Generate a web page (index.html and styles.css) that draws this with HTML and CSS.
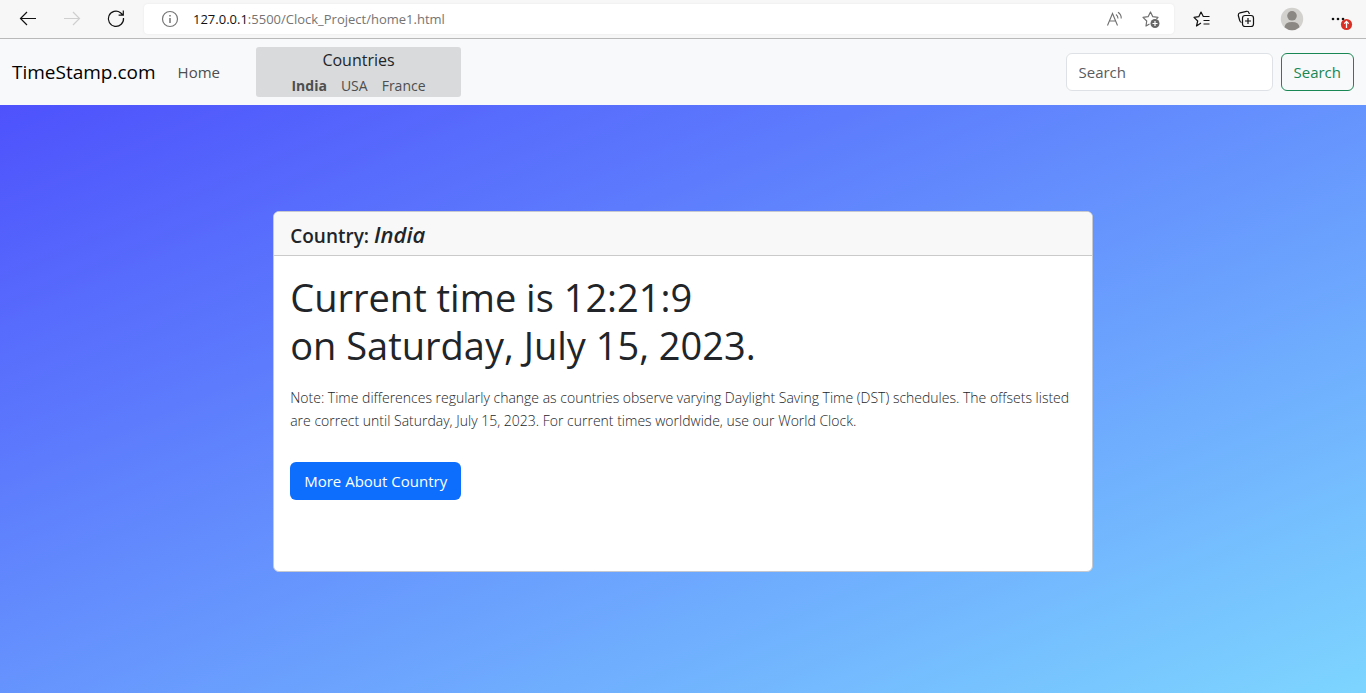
FILE: index.html
```html
<!DOCTYPE html>
<html lang="en">
<head>
<meta charset="utf-8">
<meta name="viewport" content="width=device-width, initial-scale=1">
<title>TimeStamp.com</title>
<link rel="stylesheet" href="styles.css">
</head>
<body>
<header class="toolbar">
  <button class="tool" type="button" aria-label="Back"><svg width="20" height="20" viewBox="0 0 20 20"><path d="M18 9.500H2.500M9 3L2.500 9.500L9 16" stroke="#111" stroke-width="1.200"/></svg></button>
  <button class="tool" type="button" aria-label="Forward" disabled><svg width="20" height="20" viewBox="0 0 20 20"><path d="M2 9.500H17.500M11 3L17.500 9.500L11 16" stroke="#cfcfcf" stroke-width="1.200"/></svg></button>
  <button class="tool" type="button" aria-label="Refresh"><svg width="20" height="20" viewBox="0 0 20 20"><path d="M17.500 9A7.600 7.600 0 1 1 14.500 3.700L17 6M17.300 1.500V6.200H12.600" stroke="#111" stroke-width="1.200"/></svg></button>
  <div class="address">
    <svg width="18" height="18" viewBox="0 0 18 18"><circle cx="9" cy="9" r="7.500" stroke="#767676" stroke-width="1.200"/><path d="M9 8V13M9 5V6.500" stroke="#767676" stroke-width="1.500"/></svg>
    <span class="url"><span class="host">127.0.0.1</span>:5500/Clock_Project/home1.html</span>
    <button class="tool small" type="button" aria-label="Read aloud"><svg width="18" height="18" viewBox="0 0 18 18"><path d="M1.500 15.500L6.500 3.500L11.500 15.500M3.500 11H9.700M10 4.500Q12 6 12 8.500M12 2.200Q15.500 4.500 15.200 8.500" stroke="#707070" stroke-width="1.100"/></svg></button>
    <button class="tool small" type="button" aria-label="Add to favorites"><svg width="18" height="18" viewBox="0 0 18 18"><path d="M7.500 14L4 16L4.700 11L1 7.400L6.100 6.700L8.500 2L10.800 6.700L16 7.400L14.500 9" stroke="#707070" stroke-width="1.200" stroke-linejoin="round"/><circle cx="13" cy="13.500" r="4.500" fill="#666"/><path d="M13 11V16M10.500 13.500H15.500" stroke="#fff" stroke-width="1.200"/></svg></button>
  </div>
  <div class="actions">
    <button class="tool small" type="button" aria-label="Favorites"><svg width="18" height="18" viewBox="0 0 18 18"><path d="M8 13L3.500 16L4.700 11L1 7.300L5.800 6.700L8 2L10.300 6.500H16.500M10.500 10.500H16.500M10.500 14H16.500" stroke="#111" stroke-width="1.200" stroke-linejoin="round"/></svg></button>
    <button class="tool small" type="button" aria-label="Collections"><svg width="18" height="18" viewBox="0 0 18 18"><path d="M4.500 12.500Q3 12 2.700 10.500L1.300 5.500Q1 3.500 3 2.800L9.500 1.300Q11.500 1 12 3L12.500 4" stroke="#111" stroke-width="1.200"/><rect x="5.500" y="5.500" width="11" height="11" rx="2.500" stroke="#111" stroke-width="1.200"/><path d="M11 8V14M8 11H14" stroke="#111" stroke-width="1.200"/></svg></button>
    <button class="tool profile" type="button" aria-label="Profile"><svg width="24" height="24" viewBox="0 0 24 24"><circle cx="12" cy="12" r="11.200" fill="#d3d1ce"/><circle cx="12" cy="8.800" r="4.800" fill="#8b8783"/><path d="M4.500 20.200Q5 15 12 15Q19 15 19.500 20.200Q16 23.200 12 23.200Q8 23.200 4.500 20.200Z" fill="#8b8783"/></svg></button>
    <button class="tool menu" type="button" aria-label="Settings and more"><svg width="24" height="24" viewBox="0 0 24 24"><g fill="#111"><circle cx="4" cy="12" r="1.300"/><circle cx="9" cy="12" r="1.300"/><circle cx="14" cy="12" r="1.300"/></g><circle cx="17.500" cy="17.500" r="5.600" fill="#d93025"/><path d="M17.500 21V14.500M15.300 16.600L17.500 14.400L19.700 16.600" stroke="#fff" stroke-width="1.300"/></svg></button>
  </div>
</header>
<nav class="navbar">
  <a class="brand" href="#">TimeStamp.com</a>
  <a class="home" href="#">Home</a>
  <div class="countries">
    <span class="countries-title">Countries</span>
    <div class="country-list">
      <a class="country active" href="#">India</a>
      <a class="country" href="#">USA</a>
      <a class="country" href="#">France</a>
    </div>
  </div>
  <form class="search">
    <input class="search-box" type="search" placeholder="Search" aria-label="Search">
    <button class="search-button" type="submit">Search</button>
  </form>
</nav>
<main class="page">
  <section class="card">
    <h2 class="card-header">Country: <em class="country-name">India</em></h2>
    <div class="card-body">
      <h1 class="time">Current time is 12:21:9<br>on Saturday, July 15, 2023.</h1>
      <p class="note">Note: Time differences regularly change as countries observe varying Daylight Saving Time (DST) schedules. The offsets listed are correct until Saturday, July 15, 2023. For current times worldwide, use our World Clock.</p>
      <a class="more" href="#">More About Country</a>
    </div>
  </section>
</main>
</body>
</html>
```
FILE: styles.css
```css
* { box-sizing: border-box; }

body {
  margin: 0;
  min-height: 100vh;
  display: flex;
  flex-direction: column;
  font-family: "Open Sans", "Noto Sans", sans-serif;
  font-size: 15px;
  line-height: 24px;
  color: #212529;
}

a { color: inherit; text-decoration: none; }
svg { display: block; fill: none; }

.toolbar {
  display: flex;
  align-items: center;
  height: 39px;
  padding: 0 13px 0 18px;
  gap: 24px;
  background: #f7f7f7;
  border-bottom: 1px solid #b9b9b9;
}

.tool {
  display: block;
  padding: 0;
  border: 0;
  background: none;
}

.address {
  flex: 1;
  display: flex;
  align-items: center;
  height: 30px;
  margin-left: -6px;
  padding: 0 14px 0 17px;
  gap: 18px;
  border-radius: 4px;
  background: #fff;
  box-shadow: 0 0 2px #e4e4e4;
}

.url {
  flex: 1;
  margin-left: -4px;
  font-size: 13px;
  color: #747474;
}

.host { color: #111; }

.actions {
  display: flex;
  align-items: center;
  gap: 26px;
  margin-left: -5px;
}

.profile { margin: 0 -1px; }

.navbar {
  display: flex;
  align-items: center;
  height: 66px;
  padding: 0 12px;
  background: #f8f9fa;
}

.brand {
  margin-right: 22px;
  font-size: 19px;
  color: #000;
}

.home { color: #4d4e4f; }

.countries {
  min-width: 205px;
  height: 50px;
  margin-left: 36px;
  border-radius: 3px;
  background: #d8dadb;
  text-align: center;
}

.countries-title { display: block; font-size: 16px; line-height: 27px; }

.country-list {
  display: flex;
  justify-content: center;
  gap: 14px;
  font-size: 14px;
  color: #4d4e4f;
}

.active { font-weight: 700; }

.search {
  display: flex;
  gap: 8px;
  margin-left: auto;
}

.search-box,
.search-button {
  height: 38px;
  padding: 0 12px;
  border-radius: 6px;
  font: inherit;
}

.search-box {
  width: 207px;
  border: 1px solid #dee2e6;
  background: #fff;
}

.search-box::placeholder { color: #595c5f; opacity: 1; }

.search-button {
  border: 1px solid #198754;
  background: transparent;
  color: #198754;
}

.page {
  flex: 1;
  padding-top: 106px;
  background: linear-gradient(to bottom right, #4e52fc, #7dd5ff);
}

.card {
  width: 60%;
  min-height: 361px;
  margin: 0 auto;
  border: 1px solid #c6c9cf;
  border-radius: 6px;
  background: #fff;
  overflow: hidden;
}

.card-header {
  margin: 0;
  padding: 11px 16px 5px;
  border-bottom: 1px solid #cacaca;
  background: #f8f8f8;
  font-size: 19px;
  font-weight: 600;
  line-height: 27px;
}

.country-name { font-size: 22px; line-height: 20px; }

.card-body { padding: 17px 16px; }

.time {
  margin: 0 0 17px;
  font-size: 38px;
  font-weight: 400;
  line-height: 48px;
}

.note {
  margin: 0 0 30px;
  font-size: 14px;
  font-weight: 300;
  line-height: 23px;
}

.more {
  display: inline-block;
  padding: 7px 14px;
  border-radius: 6px;
  background: #0d6efd;
  color: #fff;
}
```
